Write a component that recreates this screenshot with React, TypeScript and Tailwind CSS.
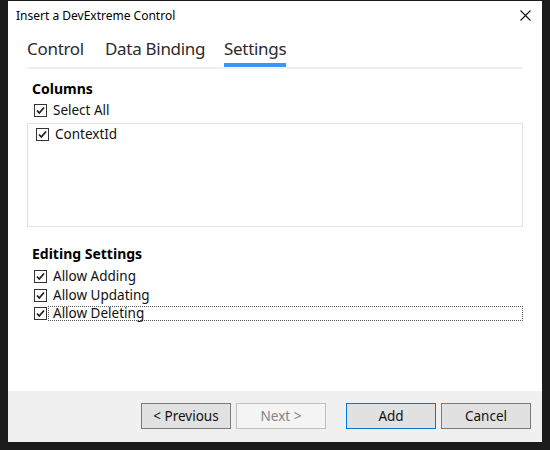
import React from 'react';

const font = { fontFamily: '"Noto Sans", "Open Sans", sans-serif' };

const CheckBox = () => (
  <span className="w-[13px] h-[13px] shrink-0 border border-[#333333] bg-white flex items-center justify-center">
    <svg width="11" height="11" viewBox="0 0 11 11">
      <path d="M2 5.5 L4.3 8 L9 2.5" fill="none" stroke="#1f1f1f" strokeWidth="1.8" />
    </svg>
  </span>
);

const CheckRow = ({ label, focused }: { label: string; focused?: boolean }) => (
  <div className="flex items-center h-[18.5px] pl-[7px]">
    <CheckBox />
    {focused ? (
      <span className="flex-1 ml-px h-[15px] border border-dotted border-[#555] pl-[4px] flex items-center text-[13.5px] text-[#111] leading-none">
        {label}
      </span>
    ) : (
      <span className="ml-[6px] text-[13.5px] text-[#111] leading-none">{label}</span>
    )}
  </div>
);

const tabs = [
  { name: 'Control', w: 'w-[57px]', active: false },
  { name: 'Data Binding', w: 'w-[98px]', active: false },
  { name: 'Settings', w: 'w-[62px]', active: true },
];

const Button = ({ label, variant }: { label: string; variant?: 'disabled' | 'default' }) => {
  const cls =
    variant === 'disabled'
      ? 'bg-[#f4f4f4] border-[#bfbfbf] text-[#838383]'
      : variant === 'default'
      ? 'bg-[#e1e1e1] border-[#0078d7] text-[#111]'
      : 'bg-[#e1e1e1] border-[#7a7a7a] text-[#111]';
  return (
    <button className={`w-[90px] h-[26px] border text-[13.5px] flex items-center justify-center ${cls}`}>
      {label}
    </button>
  );
};

export default function App() {
  return (
    <div className="w-[550px] h-[450px] bg-[#1b1b1b] pt-px px-2" style={font}>
      <div className="h-[441px] bg-white flex flex-col">
        <div className="h-[29px] flex items-center justify-between pl-2 pr-[11px]">
          <span className="text-[12px] text-black">Insert a DevExtreme Control</span>
          <svg width="11" height="11" viewBox="0 0 11 11">
            <path d="M0.5 0.5 L10.5 10.5 M10.5 0.5 L0.5 10.5" stroke="#111" strokeWidth="1.1" />
          </svg>
        </div>

        <div className="flex-1 flex flex-col px-[19px]">
          <div className="pt-[7px] flex gap-[21px] border-b-2 border-[#f0f0f0]">
            {tabs.map((t) => (
              <div key={t.name} className={`${t.w} flex flex-col`}>
                <span className="text-[17px] tracking-[-0.3px] leading-[24px] text-[#2b2b2b] whitespace-nowrap">
                  {t.name}
                </span>
                <span className={`mt-[2px] h-[4px] ${t.active ? 'bg-[#3f96f2]' : 'bg-transparent'}`} />
              </div>
            ))}
          </div>

          <div className="mt-[10px] pl-[5px] text-[14px] font-bold leading-[19px] text-black">Columns</div>
          <div className="mt-[3px]">
            <CheckRow label="Select All" />
          </div>
          <div className="mt-[3.5px] h-[104px] border border-[#e3e3e3] pl-px pt-px">
            <CheckRow label="ContextId" />
          </div>

          <div className="mt-[17px] pl-[5px] text-[14px] font-bold leading-[19px] text-black">Editing Settings</div>
          <div className="mt-[4.5px] flex flex-col">
            <CheckRow label="Allow Adding" />
            <CheckRow label="Allow Updating" />
            <CheckRow label="Allow Deleting" focused />
          </div>
        </div>

        <div className="h-[51px] bg-[#f0f0f0] flex justify-end items-start pt-[12px] pr-[11px]">
          <div className="flex gap-[5px]">
            <Button label="< Previous" />
            <Button label="Next >" variant="disabled" />
          </div>
          <div className="flex gap-[5px] ml-[20px]">
            <Button label="Add" variant="default" />
            <Button label="Cancel" />
          </div>
        </div>
      </div>
    </div>
  );
}
